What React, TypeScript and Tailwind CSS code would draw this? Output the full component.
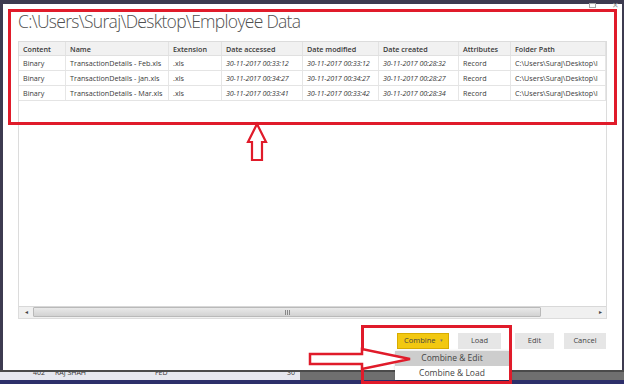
import React from "react";

const cols = [
  { label: "Content", w: 47 },
  { label: "Name", w: 103 },
  { label: "Extension", w: 53 },
  { label: "Date accessed", w: 81 },
  { label: "Date modified", w: 76 },
  { label: "Date created", w: 80 },
  { label: "Attributes", w: 52 },
  { label: "Folder Path", w: 95 },
];

const rows = [
  ["Binary", "TransactionDetails - Feb.xls", ".xls", "30-11-2017 00:33:12", "30-11-2017 00:33:12", "30-11-2017 00:28:32", "Record", "C:\\Users\\Suraj\\Desktop\\I"],
  ["Binary", "TransactionDetails - Jan.xls", ".xls", "30-11-2017 00:34:27", "30-11-2017 00:34:27", "30-11-2017 00:28:27", "Record", "C:\\Users\\Suraj\\Desktop\\I"],
  ["Binary", "TransactionDetails - Mar.xls", ".xls", "30-11-2017 00:33:41", "30-11-2017 00:33:42", "30-11-2017 00:28:34", "Record", "C:\\Users\\Suraj\\Desktop\\I"],
];

export default function App() {
  return (
    <div className="relative w-[624px] h-[384px] overflow-hidden bg-[#3d3b50] flex flex-col font-['Open_Sans',sans-serif]">
      <div className="h-[4px] shrink-0" />
      <div className="flex flex-1 min-h-0">
        <div className="w-[3px] shrink-0" />
        {/* dialog */}
        <div className="flex-1 bg-white flex flex-col">
          <div className="h-[5px] flex justify-end items-start pr-[3px] gap-[16px] text-[#a0a0a0] leading-none">
            <div className="w-[7px] h-[5px] border border-[#a8a8a8] -mt-[1px]" />
            <div className="text-[8px] -mt-[3px]">✕</div>
          </div>
          <div className="pl-[15px] h-[24px] leading-[24px] text-[17.5px] font-light text-[#505050] tracking-[-0.7px] whitespace-nowrap">
            C:\Users\Suraj\Desktop\Employee Data
          </div>
          <div className="h-[8px]" />
          {/* table area */}
          <div className="mx-[15px] flex-1 border border-[#dcdcdc] flex flex-col text-[7.2px] text-[#3a3a3a]">
            <div className="flex-1 overflow-hidden">
              <div className="flex h-[14px] bg-[#f1f1f1] font-semibold border-b border-[#e0e0e0]">
                {cols.map((c, i) => (
                  <div key={i} style={{ width: c.w }} className="shrink-0 px-[4px] leading-[14px] border-r border-[#e2e2e2] whitespace-nowrap overflow-hidden">
                    {c.label}
                  </div>
                ))}
              </div>
              {rows.map((r, ri) => (
                <div key={ri} className="flex h-[15px] border-b border-[#e4e4e4]">
                  {r.map((v, ci) => (
                    <div
                      key={ci}
                      style={{ width: cols[ci].w }}
                      className={
                        "shrink-0 px-[4px] leading-[15px] border-r border-[#e6e6e6] whitespace-nowrap overflow-hidden " +
                        (ci >= 3 && ci <= 5 ? "italic tracking-[-0.15px]" : "")
                      }
                    >
                      {v}
                    </div>
                  ))}
                </div>
              ))}
            </div>
            {/* scrollbar */}
            <div className="h-[12px] flex bg-[#f0f0f0] border-t border-[#d8d8d8]">
              <div className="w-[14px] flex items-center justify-center text-[6px] text-[#444]">◂</div>
              <div className="w-[508px] h-[10px] bg-gradient-to-b from-[#e9e9e9] to-[#d2d2d2] border border-[#b9b9b9] rounded-[1px] flex items-center justify-center">
                <div className="flex gap-[1px]">
                  <div className="w-[1px] h-[5px] bg-[#888]" />
                  <div className="w-[1px] h-[5px] bg-[#888]" />
                  <div className="w-[1px] h-[5px] bg-[#888]" />
                </div>
              </div>
              <div className="flex-1" />
              <div className="w-[12px] flex items-center justify-center text-[6px] text-[#444]">▸</div>
            </div>
          </div>
          <div className="h-[14px]" />
          {/* buttons */}
          <div className="flex justify-end pr-[16px] h-[16px] text-[7.5px] text-[#444]">
            <div className="w-[52px] bg-[#f2c811] border border-[#d8ac00] flex items-center pl-[6px] gap-[5px]">
              <span>Combine</span>
              <span className="text-[5px] text-[#777]">▾</span>
            </div>
            <div className="w-[9px]" />
            <div className="w-[43px] bg-[#e6e6e6] flex items-center justify-center">Load</div>
            <div className="w-[14px]" />
            <div className="w-[39px] bg-[#e6e6e6] flex items-center justify-center">Edit</div>
            <div className="w-[10px]" />
            <div className="w-[42px] bg-[#e6e6e6] flex items-center justify-center">Cancel</div>
          </div>
          <div className="h-[21px]" />
        </div>
        <div className="w-[4px] shrink-0" />
      </div>
      {/* background app strip */}
      <div className="h-[10px] shrink-0 flex border-t-[2px] border-[#4a4a4a]">
        <div className="w-[300px] bg-[#e6e7ee] relative overflow-hidden text-[7px] text-[#333] leading-none">
          <div className="flex -mt-[3px] pl-[33px]">
            <span className="w-[22px]">402</span>
            <span className="w-[100px]">RAJ SHAH</span>
            <span className="w-[132px]">FED</span>
            <span>30</span>
          </div>
        </div>
        <div className="flex-1 bg-[#6f6f6f]" />
      </div>
      <div className="h-[4px] shrink-0 bg-[#2d2f6a]" />

      {/* annotation overlays */}
      <div className="absolute left-[8px] top-[9px] w-[609px] h-[116px] border-[3px] border-[#e01b2a]" />
      <svg className="absolute left-0 top-0" width="624" height="384">
        <polygon points="257,124 266,142 262,142 262,160 252,160 252,142 248,142" fill="white" stroke="#e01b2a" strokeWidth="2.2" strokeLinejoin="miter" />
      </svg>

      {/* dropdown menu */}
      <div className="absolute left-[395px] top-[351px] w-[114px] bg-white shadow-[1px_1px_3px_rgba(0,0,0,0.35)] text-[8.5px] text-[#444]">
        <div className="h-[15px] bg-[#cdcdcd] flex items-center justify-center">Combine &amp; Edit</div>
        <div className="h-[14px] flex items-center justify-center">Combine &amp; Load</div>
      </div>
      <div className="absolute left-[361px] top-[325px] w-[151px] h-[59px] border-[3px] border-[#e01b2a]" />
      <svg className="absolute left-0 top-0" width="624" height="384">
        <polygon points="310,354 362,354 362,349 410,359 362,369 362,364 310,364" fill="white" stroke="#e01b2a" strokeWidth="2.5" strokeLinejoin="miter" />
      </svg>
    </div>
  );
}
